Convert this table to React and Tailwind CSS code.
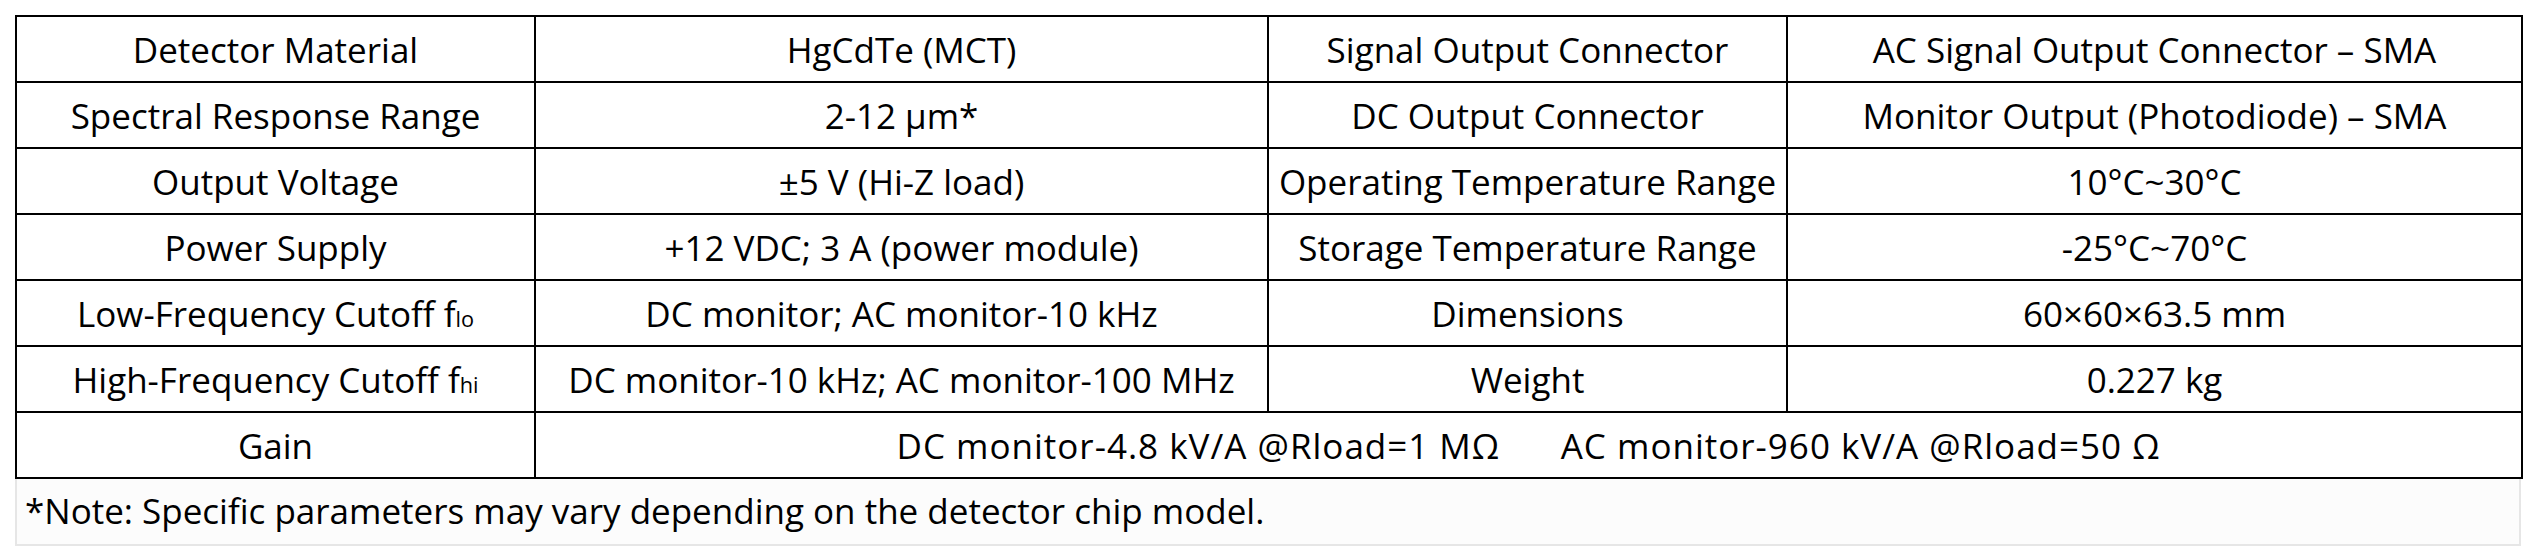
import React from "react";

const rows = [
  ["Detector Material", "HgCdTe (MCT)", "Signal Output Connector", "AC Signal Output Connector – SMA"],
  ["Spectral Response Range", "2-12 μm*", "DC Output Connector", "Monitor Output (Photodiode) – SMA"],
  ["Output Voltage", "±5 V (Hi-Z load)", "Operating Temperature Range", "10°C~30°C"],
  ["Power Supply", "+12 VDC; 3 A (power module)", "Storage Temperature Range", "-25°C~70°C"],
  [
    <>Low-Frequency Cutoff f<span className="text-[0.62em]">lo</span></>,
    "DC monitor; AC monitor-10 kHz",
    "Dimensions",
    "60×60×63.5 mm",
  ],
  [
    <>High-Frequency Cutoff f<span className="text-[0.62em]">hi</span></>,
    "DC monitor-10 kHz; AC monitor-100 MHz",
    "Weight",
    "0.227 kg",
  ],
];

export default function App() {
  return (
    <div className="w-[2536px] h-[560px] bg-white pt-[15px] pl-[15px] font-['Open_Sans',sans-serif] text-black text-[35px]">
      <table className="w-[2506px] border-collapse table-fixed">
        <colgroup>
          <col className="w-[519px]" />
          <col className="w-[733px]" />
          <col className="w-[519px]" />
          <col className="w-[735px]" />
        </colgroup>
        <tbody>
          {rows.map((r, i) => (
            <tr key={i} className="h-[66px]">
              {r.map((c, j) => (
                <td key={j} className="border-2 border-black text-center align-middle p-0 leading-none whitespace-nowrap">
                  {c}
                </td>
              ))}
            </tr>
          ))}
          <tr className="h-[66px]">
            <td className="border-2 border-black text-center align-middle p-0 leading-none">Gain</td>
            <td colSpan={3} className="border-2 border-black text-center align-middle p-0 leading-none whitespace-pre tracking-[1px]">
              {"DC monitor-4.8 kV/A @Rload=1 MΩ      AC monitor-960 kV/A @Rload=50 Ω"}
            </td>
          </tr>
        </tbody>
      </table>
      <div className="w-[2506px] h-[67px] bg-[#fcfcfc] border-2 border-t-0 border-[#e6e6e6] flex items-center pl-[8px]">
        *Note: Specific parameters may vary depending on the detector chip model.
      </div>
    </div>
  );
}
